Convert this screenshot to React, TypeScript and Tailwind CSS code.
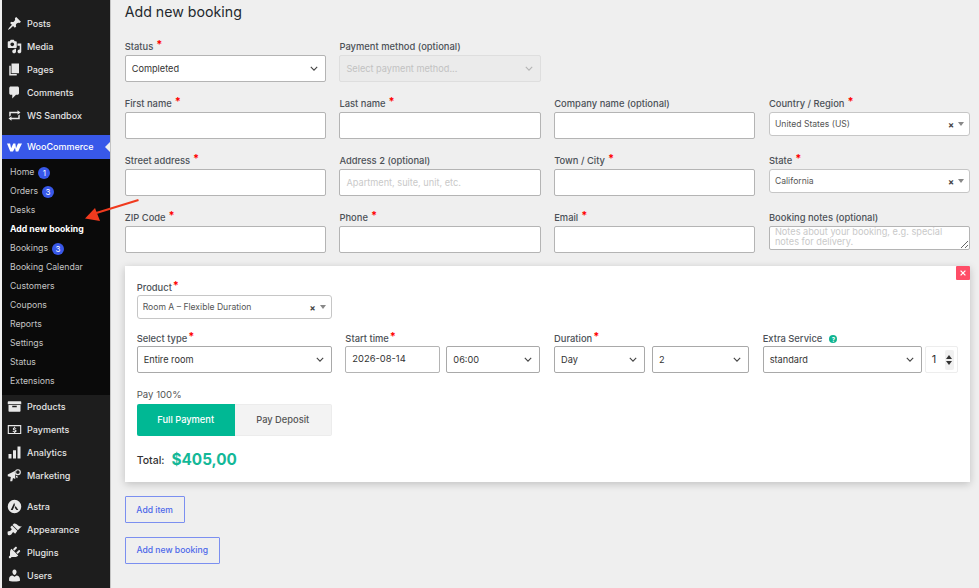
const topItems = [
  { label: "Posts", d: "M10.44 3.02l1.82-1.82 6.36 6.35-1.83 1.82c-1.05-.68-2.48-.57-3.41.36l-.75.75c-.92.93-1.04 2.35-.35 3.41l-1.83 1.82-2.41-2.41-2.8 2.79c-.42.42-3.38 2.71-3.8 2.29s1.86-3.39 2.28-3.81l2.79-2.79L4.1 9.36l1.83-1.82c1.05.69 2.48.57 3.4-.36l.75-.75c.93-.92 1.05-2.35.36-3.41z" },
  { label: "Media", d: "M13 11V4c0-.55-.45-1-1-1h-1.67L9 1H5L3.67 3H2c-.55 0-1 .45-1 1v7c0 .55.45 1 1 1h10c.55 0 1-.45 1-1zM7 4.5c1.38 0 2.5 1.12 2.5 2.5S8.38 9.5 7 9.5 4.5 8.38 4.5 7 5.62 4.5 7 4.5zM14 6h5v10.5c0 1.38-1.12 2.5-2.5 2.5S14 17.88 14 16.5s1.12-2.5 2.5-2.5c.17 0 .34.02.5.05V9h-3V6zm-4 8.05V13h2v3.5c0 1.38-1.12 2.5-2.5 2.5S7 17.88 7 16.5 8.12 14 9.5 14c.17 0 .34.02.5.05z" },
  { label: "Pages", d: "M6 15V2h10v13H6zm-1 1h8v2H3V5h2v11z" },
  { label: "Comments", d: "M5 2h9c1.1 0 2 .9 2 2v7c0 1.1-.9 2-2 2h-2l-5 5v-5H5c-1.1 0-2-.9-2-2V4c0-1.1.9-2 2-2z" },
  { label: "WS Sandbox", d: "M5 7v3l-2 1.5V5h11V3l4 3.01L14 9V7H5zm10 6v-3l2-1.5V15H6v2l-4-3.01L6 11v2h9z" },
];

const midItems = [
  { label: "Products", d: "M19 4v3H1V4c0-.55.45-1 1-1h16c.55 0 1 .45 1 1zM2 8h16v8c0 .55-.45 1-1 1H3c-.55 0-1-.45-1-1V8zm11 3V9H7v2h6z" },
  { label: "Payments", d: "M1 4h18v12H1V4zm1.5 1.5v9h15v-9h-15zM10.7 6.5v1c.8.1 1.4.4 1.9.8l-.7 1.1c-.5-.4-1.1-.6-1.7-.6-.5 0-.8.2-.8.5 0 .4.4.5 1.2.7 1.2.3 2.1.7 2.1 1.9 0 1-.7 1.6-1.9 1.8v.8H9.5v-.8c-.9-.1-1.7-.5-2.2-1l.8-1.1c.5.5 1.2.8 1.9.8.6 0 1-.2 1-.6s-.4-.5-1.2-.7c-1.2-.3-2-.8-2-1.9 0-.9.7-1.6 1.8-1.8v-1h1.1z" },
  { label: "Analytics", d: "M18 18V2h-4v16h4zm-6 0V7H8v11h4zm-6 0v-6H2v6h4z" },
  { label: "Marketing", d: "M1 8.5l10-5v11l-3-1.2-1 4.2H4.2l.9-5.6L1 11V8.5zM14.5 1.5a4 4 0 1 1 0 8 4 4 0 0 1 0-8zm0 1.6a2.4 2.4 0 1 0 0 4.8 2.4 2.4 0 0 0 0-4.8zM12 10.2l2 .4v3l-2-1.2v-2.2z" },
];

const bottomItems = [
  { label: "Astra", d: "M10 1a9 9 0 1 1 0 18 9 9 0 0 1 0-18zM9.6 5L5 14.5h2.6l3-6.6L9.6 5zm1.9 4.3l-1.2 2.5 2.4 2.7h2.4l-3.6-5.2z" },
  { label: "Appearance", d: "M14.48 11.06L7.41 3.99l1.5-1.5c.5-.56 2.3-.47 3.51.32 1.21.8 1.43 1.28 2.91 2.1 1.18.64 2.45 1.26 4.45.85zm-.71.71L6.7 4.7 4.93 6.47c-.39.39-.39 1.02 0 1.41l1.06 1.06c.39.39.39 1.03 0 1.42-.6.6-1.43 1.11-2.21 1.69L1 12.5c-.4.5-.2 4 .4 4.9.8.5 3.6-.1 4.3-.9.6-.7 1.3-1.6 1.9-2.4.39-.39 1.03-.39 1.42 0l1.06 1.06c.39.39 1.02.39 1.41 0z" },
  { label: "Plugins", d: "M13.11 4.36L9.87 7.6 8 5.73l3.24-3.24c.35-.34 1.05-.2 1.56.32.52.51.66 1.21.31 1.55zm-8 1.77l.91-1.12 9.01 9.01-1.19.84c-.71.71-2.63 1.16-3.82 1.16H6.14L4.9 17.26c-.59.59-1.54.59-2.12 0-.59-.58-.59-1.53 0-2.12l1.24-1.24v-3.88c0-1.13.4-3.19 1.09-3.89zm7.26 3.97l3.24-3.24c.34-.35 1.04-.21 1.55.31.52.51.66 1.21.31 1.55l-3.24 3.25z" },
  { label: "Users", d: "M10 9.25c-2.27 0-2.73-3.44-2.73-3.44C7 4.02 7.82 2 9.97 2c2.16 0 2.98 2.02 2.71 3.81 0 0-.41 3.44-2.68 3.44zm0 2.57L12.72 10c2.39 0 4.52 2.33 4.52 4.53v2.49s-3.65 1.13-7.24 1.13c-3.65 0-7.24-1.13-7.24-1.13v-2.49c0-2.25 1.94-4.48 4.47-4.48z" },
];

const subItems = [
  { label: "Home", badge: "1" },
  { label: "Orders", badge: "3" },
  { label: "Desks" },
  { label: "Add new booking", active: true },
  { label: "Bookings", badge: "3" },
  { label: "Booking Calendar" },
  { label: "Customers" },
  { label: "Coupons" },
  { label: "Reports" },
  { label: "Settings" },
  { label: "Status" },
  { label: "Extensions" },
];

function MenuItem({ label, d }: { label: string; d: string }) {
  return (
    <div className="flex h-[23px] items-center pl-[5px] text-[9px] font-medium text-[#e4e4e4]">
      <svg viewBox="0 0 20 20" className="mr-[5px] h-[15px] w-[15px] fill-[#e8e8e8]">
        <path d={d} fillRule="evenodd" />
      </svg>
      {label}
    </div>
  );
}

function Chevron({ color = "#444" }: { color?: string }) {
  return (
    <svg viewBox="0 0 10 6" className="h-[5px] w-[8px] shrink-0" fill="none" stroke={color} strokeWidth="1.4">
      <path d="M1 1l4 4 4-4" />
    </svg>
  );
}

function Req({ tight }: { tight?: boolean }) {
  return <span className={`relative -top-[3px] font-bold text-[11px] leading-none text-[#f00] ${tight ? "ml-px" : "ml-[3px]"}`}>*</span>;
}

function Label({ text, req, tight }: { text: string; req?: boolean; tight?: boolean }) {
  return (
    <div className={`flex items-center text-[9.4px] font-medium text-[#4c5157] ${tight ? "h-[17px] pt-[3px]" : "h-[18px] pt-[2px]"}`}>
      {text}
      {req && <Req tight={tight} />}
    </div>
  );
}

function TextInput({ label, req, placeholder }: { label: string; req?: boolean; placeholder?: string }) {
  return (
    <div>
      <Label text={label} req={req} />
      <input
        placeholder={placeholder}
        className="block h-[27px] w-full rounded-[2px] border border-[#b4b4b4] bg-white px-[6px] text-[9.2px] outline-none placeholder:text-[#c9c9c9]"
      />
    </div>
  );
}

function SelectBox({ value, className = "" }: { value: string; className?: string }) {
  return (
    <div className={`flex h-[27px] items-center justify-between rounded-[2px] border border-[#a9a9a9] bg-white pl-[6px] pr-[7px] text-[9.2px] text-[#333] ${className}`}>
      <span>{value}</span>
      <Chevron />
    </div>
  );
}

function Select2({ value, className = "" }: { value: string; className?: string }) {
  return (
    <div className={`flex h-[24px] items-center rounded-[3px] border border-[#c6c6c6] bg-white pl-[5px] pr-[5px] text-[8.6px] text-[#555] ${className}`}>
      <span className="flex-1">{value}</span>
      <span className="mr-[4px] text-[9px] font-bold leading-none text-[#444]">×</span>
      <span className="h-0 w-0 border-x-[3px] border-t-[4px] border-x-transparent border-t-[#888]" />
    </div>
  );
}

export default function App() {
  return (
    <div className="relative flex h-[588px] w-[979px] overflow-hidden bg-[#efefef] font-['Inter',sans-serif]">
      <aside className="ml-[2px] w-[108px] shrink-0 bg-[#1d1d1d] pt-[12px]">
        {topItems.map((it) => (
          <MenuItem key={it.label} {...it} />
        ))}
        <div className="relative mt-[8px] flex h-[24px] items-center bg-[#3858e9] pl-[5px] text-[9px] font-medium text-white">
          <svg viewBox="0 0 24 13" className="mr-[5px] h-[9px] w-[15px] fill-white">
            <path d="M0 0h5l1.6 7.5L10 0h3.4l1 7.5L17.6 0H24c-2.3 4-4.2 8.2-6 13h-4l-1.2-6.2L9.6 13H5.2L0 0z" />
          </svg>
          WooCommerce
          <span className="absolute right-0 top-[7px] h-0 w-0 border-y-[5px] border-r-[5px] border-y-transparent border-r-[#efefef]" />
        </div>
        <div className="bg-[#0a0a0a] pb-[4px] pt-[4px]">
          {subItems.map((it) => (
            <div
              key={it.label}
              className={`flex h-[19px] items-center pl-[8px] text-[8.7px] ${it.active ? "font-bold text-white" : "text-[#c4c4c4]"}`}
            >
              {it.label}
              {it.badge && (
                <span className="ml-[4px] flex h-[12px] w-[12px] items-center justify-center rounded-full bg-[#3858e9] text-[8px] text-white">
                  {it.badge}
                </span>
              )}
            </div>
          ))}
        </div>
        {midItems.map((it) => (
          <MenuItem key={it.label} {...it} />
        ))}
        <div className="h-[8px]" />
        {bottomItems.map((it) => (
          <MenuItem key={it.label} {...it} />
        ))}
      </aside>

      <main className="flex-1 border-l border-[#c4c4c4] pl-[13.7px]">
        <h1 className="flex h-[24px] items-center text-[14.2px] font-normal text-[#23282d]">Add new booking</h1>

        <div className="mt-[13px] grid w-[845.5px] grid-cols-4 gap-x-[13.5px] gap-y-[12px]">
          <div>
            <Label text="Status" req />
            <SelectBox value="Completed" className="!border-[#b4b4b4]" />
          </div>
          <div>
            <Label text="Payment method (optional)" />
            <div className="flex h-[27px] items-center justify-between rounded-[2px] border border-[#dedede] bg-[#ebebeb] pl-[6px] pr-[7px] text-[9.2px] text-[#c2c2c2]">
              <span>Select payment method...</span>
              <Chevron color="#b5b5b5" />
            </div>
          </div>
          <div />
          <div />

          <TextInput label="First name" req />
          <TextInput label="Last name" req />
          <TextInput label="Company name (optional)" />
          <div>
            <Label text="Country / Region" req />
            <Select2 value="United States (US)" />
          </div>

          <TextInput label="Street address" req />
          <TextInput label="Address 2 (optional)" placeholder="Apartment, suite, unit, etc." />
          <TextInput label="Town / City" req />
          <div>
            <Label text="State" req />
            <Select2 value="California" />
          </div>

          <TextInput label="ZIP Code" req />
          <TextInput label="Phone" req />
          <TextInput label="Email" req />
          <div>
            <Label text="Booking notes (optional)" />
            <textarea
              placeholder="Notes about your booking, e.g. special notes for delivery."
              className="block h-[24px] w-full overflow-hidden rounded-[2px] border border-[#b4b4b4] bg-white px-[5px] text-[9.2px] leading-[10px] outline-none placeholder:text-[#c9c9c9]"
            />
          </div>
        </div>

        <section className="relative mt-[13px] h-[216px] w-[845px] bg-white px-[12px] pt-[12px] shadow-[0_2px_8px_rgba(0,0,0,0.2)]">
          <button className="absolute right-0 top-0 flex h-[14px] w-[14px] items-center justify-center rounded-[1px] bg-[#ff4d67]">
            <svg viewBox="0 0 10 10" className="h-[8px] w-[8px]" fill="none" stroke="white" strokeWidth="1.6">
              <path d="M2 2l6 6M8 2l-6 6" />
            </svg>
          </button>

          <div className="w-[195px]">
            <Label text="Product" req tight />
            <Select2 value="Room A – Flexible Duration" />
          </div>

          <div className="mt-[10px] grid grid-cols-4 gap-x-[13.67px]">
            <div>
              <Label text="Select type" req tight />
              <SelectBox value="Entire room" />
            </div>
            <div>
              <Label text="Start time" req tight />
              <div className="flex gap-[6px]">
                <div className="flex h-[27px] w-[95px] items-center rounded-[2px] border border-[#b4b4b4] bg-white pl-[6px] text-[9.4px] text-[#333]">
                  2026-08-14
                </div>
                <SelectBox value="06:00" className="flex-1" />
              </div>
            </div>
            <div>
              <Label text="Duration" req tight />
              <div className="flex gap-[7px]">
                <SelectBox value="Day" className="w-[91px]" />
                <SelectBox value="2" className="flex-1" />
              </div>
            </div>
            <div>
              <div className="flex h-[17px] items-center pt-[3px] text-[9.4px] font-medium text-[#4c5157]">
                Extra Service
                <span className="ml-[7px] flex h-[8px] w-[8px] items-center justify-center rounded-full bg-[#10b592] text-[6px] font-bold text-white">?</span>
              </div>
              <div className="flex gap-[3px]">
                <SelectBox value="standard" className="flex-1" />
                <div className="flex h-[27px] w-[33px] items-center justify-between rounded-[2px] border border-[#ededed] bg-white pl-[6px] pr-[3px] text-[11px] text-[#333]">
                  1
                  <span className="flex h-[20px] w-[9px] flex-col items-center justify-center gap-[2px] rounded-[2px] bg-[#f1f1f1]">
                    <span className="h-0 w-0 border-x-[3px] border-b-[4px] border-x-transparent border-b-[#333]" />
                    <span className="h-0 w-0 border-x-[3px] border-t-[4px] border-x-transparent border-t-[#333]" />
                  </span>
                </div>
              </div>
            </div>
          </div>

          <div className="mt-[14px] flex h-[17px] items-center text-[9.6px] text-[#555]">Pay 100%</div>
          <div className="flex h-[32px] w-[195px] overflow-hidden rounded-[2px] bg-[#f3f3f3] text-[9.3px] font-medium">
            <div className="flex w-[98px] items-center justify-center bg-[#00b894] text-white">Full Payment</div>
            <div className="flex flex-1 items-center justify-center rounded-r-[2px] border border-l-0 border-[#ececec] text-[#555]">Pay Deposit</div>
          </div>

          <div className="mt-[13px] flex items-center">
            <span className="text-[10.5px] font-medium text-[#333]">Total:</span>
            <span className="ml-[7px] text-[15.3px] font-bold text-[#14b898]">$405,00</span>
          </div>
        </section>

        <button className="mt-[14px] block h-[27px] w-[60px] rounded-[1px] border border-[#7b8ff0] pt-px text-center text-[8.6px] font-medium text-[#4d68ea]">
          Add item
        </button>
        <button className="mt-[14px] block h-[27px] w-[95px] rounded-[1px] border border-[#7b8ff0] text-center text-[8.6px] font-medium text-[#4d68ea]">
          Add new booking
        </button>
      </main>

      <svg viewBox="0 0 979 588" className="pointer-events-none absolute left-0 top-0 h-[588px] w-[979px]">
        <path d="M138.5 200L93 214" stroke="#f03a1e" strokeWidth="2" fill="none" />
        <path d="M85 218.5l10-10.5 5 13z" fill="#f03a1e" />
      </svg>
    </div>
  );
}
